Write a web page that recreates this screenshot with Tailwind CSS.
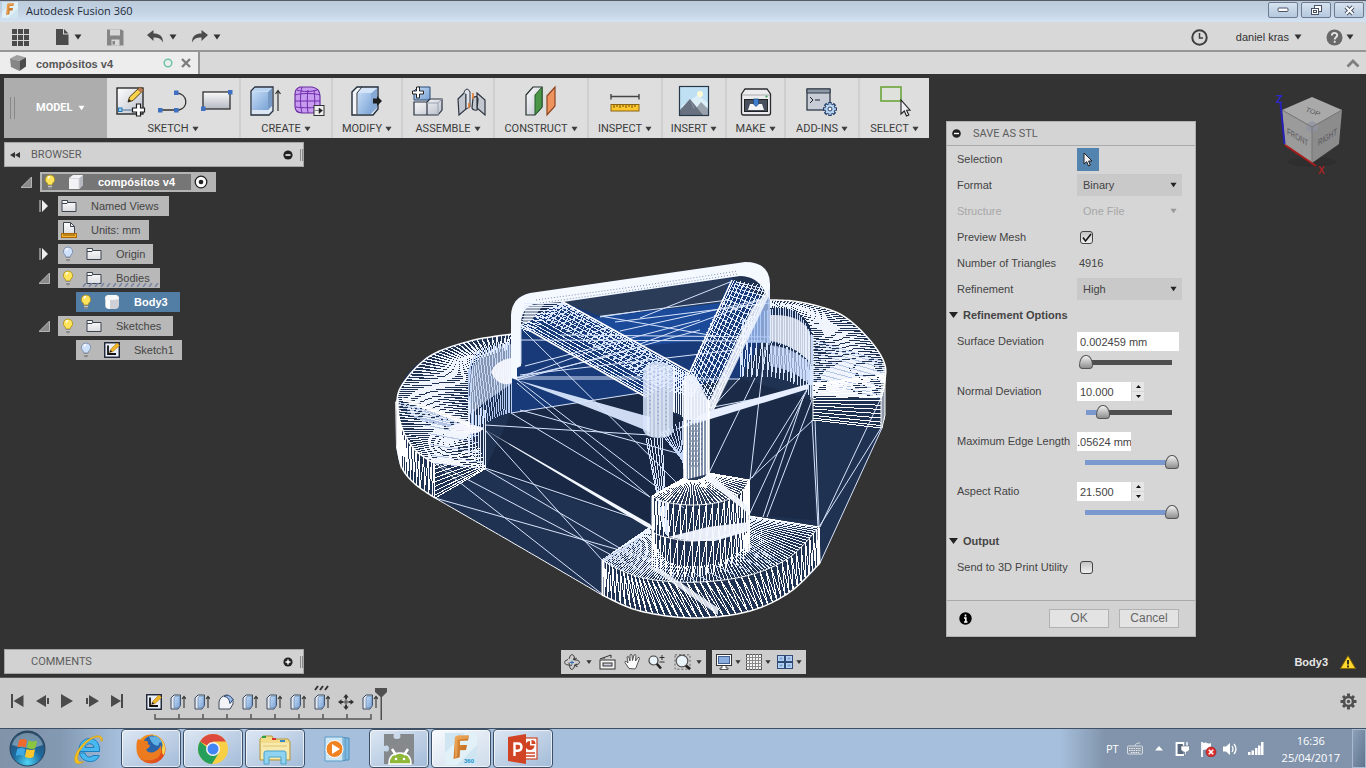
<!DOCTYPE html>
<html lang="en">
<head>
<meta charset="utf-8">
<meta name="viewport" content="width=device-width, initial-scale=1">
<title>Autodesk Fusion 360</title>
<script src="https://cdn.jsdelivr.net/npm/@tailwindcss/browser@4"></script>
</head>
<body class="flex h-screen min-h-[720px] flex-col overflow-hidden bg-[#333333] font-['Liberation_Sans',Arial,sans-serif] text-[11px] leading-4 text-[#444]">

<!-- Shared icon symbols -->
<svg class="absolute size-0" aria-hidden="true">
  <defs>
    <linearGradient id="gGrey" x1="0" y1="0" x2="1" y2="1"><stop offset="0" stop-color="#fff"/><stop offset="1" stop-color="#b9bec9"/></linearGradient>
    <linearGradient id="gGreyV" x1="0" y1="0" x2="0" y2="1"><stop offset="0" stop-color="#fafafa"/><stop offset="1" stop-color="#b4b8c2"/></linearGradient>
    <linearGradient id="gFold" x1="0" y1="0" x2="0" y2="1"><stop offset="0" stop-color="#fdfdfd"/><stop offset="1" stop-color="#dcdde2"/></linearGradient>
    <linearGradient id="gBlue" x1="0" y1="0" x2="1" y2="1"><stop offset="0" stop-color="#c4dbf5"/><stop offset="1" stop-color="#7ba4d6"/></linearGradient>
    <radialGradient id="gOrb" cx=".5" cy=".9" r=".9"><stop offset="0" stop-color="#4fd5f5"/><stop offset=".45" stop-color="#1c6ba0"/><stop offset="1" stop-color="#2b4a66"/></radialGradient>
    <linearGradient id="gFox" x1="0" y1="0" x2="1" y2="1"><stop offset="0" stop-color="#f9a11b"/><stop offset="1" stop-color="#d8391b"/></linearGradient>
    <linearGradient id="gF" x1="0" y1="0" x2="1" y2="1"><stop offset="0" stop-color="#e8963c"/><stop offset="1" stop-color="#b5611c"/></linearGradient>
  </defs>
  <symbol id="caret" viewBox="0 0 8 6"><path d="M0.500 .5h7L4 5.500z" fill="currentColor"/></symbol>
  <symbol id="bulbOn" viewBox="0 0 12 16"><path d="M6 1a4.500 4.500 0 0 0-3 8c.6.7.8 1.200.8 2h4.400c0-.8.2-1.300.8-2A4.500 4.500 0 0 0 6 1z" fill="#ffe45c" stroke="#a58a1c" stroke-width=".8"/><path d="M4 4.500q.5-1.700 2-2" stroke="#fff" stroke-width="1.300" fill="none"/><path d="M4 11h4v3l-1 1.200H5L4 14z" fill="#8a8a8a"/><path d="M4 12.500h4" stroke="#ddd" stroke-width=".7"/></symbol>
  <symbol id="bulbOff" viewBox="0 0 12 16"><path d="M6 1a4.500 4.500 0 0 0-3 8c.6.7.8 1.200.8 2h4.400c0-.8.2-1.300.8-2A4.500 4.500 0 0 0 6 1z" fill="#cfe0fa" stroke="#6f83a8" stroke-width=".8"/><path d="M4 4.500q.5-1.700 2-2" stroke="#fff" stroke-width="1.300" fill="none"/><path d="M4 11h4v3l-1 1.200H5L4 14z" fill="#8a8a8a"/><path d="M4 12.500h4" stroke="#ddd" stroke-width=".7"/></symbol>
  <symbol id="folder" viewBox="0 0 16 14"><path d="M1 12.500V1.500h5.500v2H15v9z" fill="url(#gFold)" stroke="#3c4450"/><path d="M1 4.500h5l1-1" stroke="#3c4450" fill="none"/></symbol>
  <symbol id="sketch" viewBox="0 0 16 16"><rect x=".75" y=".75" width="14.500" height="14.500" fill="#e9eefa" stroke="#1a2233" stroke-width="1.400"/><path d="M4 3.500V12h8" fill="none" stroke="#111" stroke-width="1.800"/><path d="M5.500 10.500 7 7l6-6 2.500 2.500-6.500 6z" fill="#f0b429" stroke="#b37f10" stroke-width=".6"/><path d="M5.500 10.500 6.500 8l1.800 1.600z" fill="#222"/></symbol>
  <symbol id="extr" viewBox="0 0 16 16"><path d="M1 4 4 1h6.500v10.500L8 15H1z" fill="#e5e9f0" stroke="#3c4a5c"/><path d="M4 4.500 5.500 2h4.500v9l-2 3H4z" fill="url(#gBlue)" stroke="#5577a5" stroke-width=".6"/><path d="M14 14V3M12 5l2-2.700L16 5" fill="none" stroke="#333" stroke-width="1.100"/></symbol>
  <symbol id="fusion" viewBox="0 0 32 32"><rect width="32" height="32" fill="#e2f1f8"/><path d="M0 20 20 0H0zM12 32 32 12v20z" fill="#cfe6f2"/><path d="M10 4 13 2.500h11l-1 5-8 .5v4h7l-1 5-6 .3-.3 7-6.200 1.700z" fill="url(#gF)"/><path d="M10 4v22l2.500-3V6.500l11-1 .5-3H13z" fill="#f0b067" opacity=".6"/></symbol>
</svg>

<!-- Window title bar -->
<header class="flex h-[22px] shrink-0 items-start border-t border-[#565b66] bg-gradient-to-b from-[#bccbda] via-[#c3d3e4] to-[#d3e3f2]">
  <svg class="ml-0.5 mt-px size-4" viewBox="0 0 32 32"><use href="#fusion"/></svg>
  <h1 class="ml-2 mt-px font-['Open_Sans','Noto_Sans',sans-serif] text-[11px] leading-[18px] text-[#1e2a38]">Autodesk Fusion 360</h1>
  <div class="ml-auto mr-0.5 mt-px flex gap-[3px]">
    <button aria-label="Minimize" class="grid h-4 w-[30px] place-items-center rounded-xs border border-[#6c7b90] bg-gradient-to-b from-[#d7e2ef] to-[#b4c8de]"><svg width="12" height="6"><rect x="1" y="1" width="10" height="3.500" rx="1" fill="#fff" stroke="#4a5366"/></svg></button>
    <button aria-label="Restore" class="grid h-4 w-[30px] place-items-center rounded-xs border border-[#6c7b90] bg-gradient-to-b from-[#d7e2ef] to-[#b4c8de]"><svg width="13" height="12" fill="#fff" stroke="#4a5366"><rect x="4.500" y="1.500" width="7" height="6"/><rect x="1.500" y="4.500" width="7" height="6"/><rect x="3.500" y="6.500" width="3" height="2"/></svg></button>
    <button aria-label="Close" class="grid h-4 w-[30px] place-items-center rounded-xs border border-[#6c7b90] bg-gradient-to-b from-[#d7e2ef] to-[#b4c8de]"><svg width="13" height="11"><path d="M3 2l7 7M10 2L3 9" stroke="#4a5366" stroke-width="4"/><path d="M3 2l7 7M10 2L3 9" stroke="#fff" stroke-width="2"/></svg></button>
  </div>
</header>

<!-- Quick access bar -->
<nav class="flex h-[30px] shrink-0 items-center border-b-2 border-[#969696] bg-[#d8d8d8] pt-0.5 text-[#333]" aria-label="Quick access">
  <button aria-label="Data panel" class="ml-3"><svg width="17" height="17" fill="#4b4b4b"><path d="M0 0h5v5H0zM6 0h5v5H6zM12 0h5v5h-5zM0 6h5v5H0zM6 6h5v5H6zM12 6h5v5h-5zM0 12h5v5H0zM6 12h5v5H6zM12 12h5v5h-5z"/></svg></button>
  <button aria-label="File" class="ml-[26px] flex items-center gap-[5px]"><svg width="14" height="16"><path d="M1 0h7v5.500h5.500V16H1z" fill="#4b4b4b"/><path d="M9 0l4.500 4.500H9z" fill="#4b4b4b"/></svg><svg class="h-1.5 w-2"><use href="#caret"/></svg></button>
  <button aria-label="Save" class="ml-[25px]"><svg width="17" height="17"><path d="M0 .5h14.500L16.500 2v14.500H0z" fill="#858585"/><path d="M3 .500h10v6H3zM4.500 10.500h8v6h-8z" fill="#d8d8d8"/><path d="M5.500 12h2.500v3.500H5.500z" fill="#858585"/></svg></button>
  <button aria-label="Undo" class="ml-[23px] flex items-center gap-[5px]"><svg width="17" height="14"><path d="M0 5 6.500 0v3.500c6 0 9.500 2.500 9.500 9-2-4-4.500-5-9.500-5V11z" fill="#4b4b4b"/></svg><svg class="h-1.5 w-2"><use href="#caret"/></svg></button>
  <button aria-label="Redo" class="ml-3.5 flex items-center gap-[5px]"><svg width="17" height="14"><path d="M17 5 10.500 0v3.500c-6 0-9.500 2.500-9.500 9 2-4 4.500-5 9.500-5V11z" fill="#4b4b4b"/></svg><svg class="h-1.5 w-2"><use href="#caret"/></svg></button>
  <button aria-label="Job status" class="ml-auto"><svg width="17" height="17" fill="none" stroke="#3e3e3e" stroke-width="2"><circle cx="8.500" cy="8.500" r="7.200"/><path d="M8.500 4v5H12" stroke-width="1.500"/></svg></button>
  <button class="ml-7 flex items-center gap-[5px]">daniel kras <svg class="h-1.5 w-2"><use href="#caret"/></svg></button>
  <button aria-label="Help" class="ml-6 mr-3 flex items-center gap-[3px]"><svg width="17" height="17"><circle cx="8.500" cy="8.500" r="8" fill="#686868"/><path d="M5.800 6.500c0-3.500 5.400-3.500 5.400-.3 0 2-2.500 2-2.500 4.300M8.700 11.800v2" fill="none" stroke="#e4e4e4" stroke-width="1.900"/></svg><svg class="h-1.5 w-2"><use href="#caret"/></svg></button>
</nav>

<!-- Document tabs -->
<div class="flex h-[22px] shrink-0 items-stretch bg-[#d9d9d9]">
  <div class="flex w-[200px] items-center border-r-2 border-[#969696] bg-[#ededed] pl-2.5">
    <svg width="17" height="17"><path d="M0 3.500 7 0l9 2.500L9.500 6z" fill="#a0a0a0"/><path d="M0 3.500 9.500 6v10L1 12z" fill="#868686"/><path d="M9.500 6 16 2.500v9L9.500 16z" fill="#4c4c4c"/></svg>
    <span class="ml-[9px] pt-0.5 text-[11px] font-bold text-[#555]">compósitos v4</span>
    <svg class="ml-auto" width="10" height="10"><circle cx="5" cy="5" r="3.800" fill="none" stroke="#6cc3a6" stroke-width="1.500"/></svg>
    <button aria-label="Close tab" class="ml-2 mr-[7px]"><svg width="10" height="10"><path d="M1 1l8 8M9 1L1 9" stroke="#7d7d7d" stroke-width="2.400"/></svg></button>
  </div>
  <button aria-label="Collapse" class="ml-auto mr-1.5"><svg width="14" height="9"><path d="M1.500 7.500 7 2l5.500 5.500" fill="none" stroke="#7e7e7e" stroke-width="2.800"/></svg></button>
</div>

<!-- Modelling canvas -->
<main class="relative flex min-h-0 flex-1 flex-col border-b border-[#5a5a5a] bg-[#333333] px-1 pb-[3px] pt-1">

  <svg id="mesh" class="absolute left-1/2 top-[176px] h-[380px] w-[505px] -translate-x-[293px]" viewBox="390 250 505 380" role="img" aria-label="Body3 preview mesh"></svg>

  <svg class="absolute right-4 top-4 h-[90px] w-[80px]" viewBox="1270 90 80 90" role="img" aria-label="View cube">
    <ellipse cx="1312" cy="162" rx="24" ry="5" fill="#2e2e2e"/>
    <path d="M1282 110 1312 97l30 13-30 17z" fill="#a9a9a9"/><path d="M1282 110l30 17v36l-27-18z" fill="#9b9b9b"/><path d="M1342 110l-30 17v36l27-19z" fill="#8c8c8c"/>
    <path d="M1306 124l6-3 6 3v6l-6 3-6-3z" fill="#8f93a3" opacity=".7"/>
    <path d="M1282 110l30 17 30-17M1312 127v36" fill="none" stroke="#777"/>
    <path d="M1280.500 103l4 41" stroke="#2620b8" stroke-width="2"/><path d="M1285 145l31 21" stroke="#a81c1c" stroke-width="2"/>
    <g font-family="Liberation Sans, sans-serif" font-size="9" fill="#55555a">
      <text transform="matrix(.75 .28 -.35 .6 1305 111)" font-size="9">TOP</text>
      <text transform="matrix(.68 .4 0 1 1287 134)">FRONT</text>
      <text transform="matrix(.68 -.42 0 1 1318 146)">RIGHT</text>
    </g>
    <text x="1276" y="103" font-size="11" font-weight="bold" fill="#2c26d0" font-family="Liberation Sans, sans-serif">Z</text>
    <text x="1318" y="174" font-size="10" font-weight="bold" fill="#a82222" font-family="Liberation Sans, sans-serif">X</text>
  </svg>

  <!-- Command ribbon -->
  <div class="flex h-[60px] shrink-0 self-start bg-[#dedede] font-['Roboto',sans-serif] text-[#3c3c3c]" role="toolbar" aria-label="Model tools">
    <button class="flex w-[103px] items-center bg-[#adadad] pl-1.5 font-bold text-white"><span class="h-[22px] w-[5px] border-x border-[#888]"></span><span class="ml-[21px]">MODEL</span><svg class="ml-[5px] h-1.5 w-[7px]"><use href="#caret"/></svg></button>
    <div class="flex w-[134px] flex-col items-center justify-between border-r-2 border-[#cfcfcf] pt-[7px] pb-px">
      <div class="flex w-full items-center justify-between pl-2 pr-1.5">
        <svg width="32" height="32" viewBox="0 0 32 32"><rect x="2" y="3" width="26" height="26" fill="url(#gGrey)" stroke="#1d1d1d" stroke-width="1.300"/><path d="M4 25h16" stroke="#4a6f9e"/><rect x="3.500" y="23" width="3.500" height="3.500" fill="#8fd0f2" stroke="#2576b2"/><path d="M13 17l1.500-5L25 2l3.500 3L18 15.500z" fill="#f7d24a" stroke="#4d3a10"/><path d="M25 2l3.500 3-2.500 2.500L22.500 5z" fill="#b87b53"/><path d="M13 17l1-3 2 2z" fill="#222"/><path d="M21.500 19h4v4h4v4h-4v4h-4v-4h-4v-4h4z" fill="#fff" stroke="#1d1d1d" stroke-width="1.200"/></svg>
        <svg width="32" height="32" viewBox="0 0 32 32"><path d="M2 25h19c10-2 9-17-3-17" fill="none" stroke="#333" stroke-width="1.300"/><path d="M0 23h4.500v4.500H0zM16 23h4.500v4.500H16zM16 5.500h4.500V10H16z" fill="#3f70c4"/></svg>
        <svg width="32" height="32" viewBox="0 0 32 32"><rect x="2" y="7" width="27" height="17" fill="url(#gGreyV)" stroke="#222" stroke-width="1.200"/><path d="M0 21.500h4.500V26H0zM27 5h4.500v4.500H27z" fill="#3f70c4"/></svg>
      </div>
      <div class="flex items-center gap-[3px]">SKETCH <svg class="h-1.5 w-[7px]"><use href="#caret"/></svg></div>
    </div>
    <div class="flex w-[92px] flex-col items-center justify-between border-r-2 border-[#cfcfcf] pt-[7px] pb-px">
      <div class="flex w-full items-center justify-between pl-2 pr-1.5">
        <svg width="34" height="32" viewBox="0 0 34 32"><path d="M2 6 6 2h18v24l-4 4H2z" fill="#dce6f2" stroke="#26323f" stroke-width="1.300"/><path d="M3 7h16v18H3z" fill="url(#gBlue)"/><path d="M19 7l4-4v18l-4 4z" fill="#7699c4"/><path d="M3 6.500l3-3.500h16l-3 3.500z" fill="#b9d4f0"/><path d="M29 26V6M26.500 9 29 5.500 31.500 9" fill="none" stroke="#333" stroke-width="1.200"/></svg>
        <svg width="32" height="32" viewBox="0 0 32 32"><path d="M7 2h12c6 1 8 5 8 9v9c0 5-3 7-7 8H9c-5 0-7-3-7-7V9c0-4 2-6 5-7z" fill="#c79bf0" stroke="#6a2fa0" stroke-width="1.200"/><path d="M9 2c-2 6-2 19 0 26M15 5c-1 6-1 17 0 23M21 5c1 6 1 17 0 22M2 10c6-2 19-2 25 0M2 16h25M3 22c6 1 18 1 24 0M4 5c6 2 14 2 20 0" fill="none" stroke="#6f2bab"/><rect x="21" y="20.500" width="10" height="10" fill="#eee" stroke="#333"/><path d="M22 25.500h4v-2.500l3.500 2.500-3.500 3V25.500" fill="#222" stroke="#222" stroke-width=".5"/></svg>
      </div>
      <div class="flex items-center gap-[3px]">CREATE <svg class="h-1.5 w-[7px]"><use href="#caret"/></svg></div>
    </div>
    <div class="flex w-[70px] flex-col items-center justify-between border-r-2 border-[#cfcfcf] pt-[7px] pb-px">
      <svg width="32" height="32" viewBox="0 0 32 32"><path d="M1 7 6 2h21v22l-5 6H1z" fill="#f2f4f7" stroke="#222e3c" stroke-width="1.400"/><path d="M7 7.500h13v21.500H7z" fill="url(#gBlue)"/><path d="M20 8l6-5v20l-6 6z" fill="#86a9d6"/><path d="M7 7.500 12 3h14l-6 5z" fill="#d3e4f8"/><path d="M6 29V8l5-6" fill="none" stroke="#222e3c"/><path d="M22 13.500h4V11l5 5-5 5v-2.500h-4z" fill="#1e1e1e"/></svg>
      <div class="flex items-center gap-[3px]">MODIFY <svg class="h-1.5 w-[7px]"><use href="#caret"/></svg></div>
    </div>
    <div class="flex w-[92px] flex-col items-center justify-between border-r-2 border-[#cfcfcf] pt-[7px] pb-px">
      <div class="flex w-full items-center justify-between pl-2 pr-1.5">
        <svg width="32" height="32" viewBox="0 0 32 32"><path d="M3 6l4-4h12v13H3z" fill="url(#gBlue)" stroke="#2a4a75"/><path d="M3 17h13v13H3zM16 17l3-3h12v11l-4 5H16z" fill="url(#gGrey)" stroke="#2b3340" stroke-width="1.200"/><path d="M27 30V18l4-4M16 18h11" stroke="#9aa3b2" fill="none"/><path d="M5.500 2h3v4h4v3h-4v4h-3V9h-4V6h4z" fill="#fff" stroke="#222"/></svg>
        <svg width="30" height="32" viewBox="0 0 30 32"><path d="M1 14 9 6v18L2 30z" fill="#c3c8d0" stroke="#2d3440" stroke-width="1.200"/><path d="M7 7q3-6 6 0v15l-4 2V9" fill="#dfe3e9" stroke="#2d3440"/><path d="M16 13q4-3 5 1l-1 11q-4 1-5-2zM20 8l8 7v15l-8-7z" fill="#c3c8d0" stroke="#2d3440" stroke-width="1.200"/><path d="M16 8v6M12 18v5" stroke="#e37c2a" stroke-width="1.600"/></svg>
      </div>
      <div class="flex items-center gap-[3px]">ASSEMBLE <svg class="h-1.5 w-[7px]"><use href="#caret"/></svg></div>
    </div>
    <div class="flex w-[94px] flex-col items-center justify-between border-r-2 border-[#cfcfcf] pt-[7px] pb-px">
      <svg width="32" height="32" viewBox="0 0 32 32"><path d="M1 10 8 2h9v20l-7 8H1z" fill="url(#gGrey)" stroke="#26302c" stroke-width="1.200"/><path d="M10 10l7-8v20l-7 8z" fill="#4a9646" stroke="#235a28"/><path d="M22 11l8-9v19l-8 9z" fill="#ee935e" stroke="#8d4420" stroke-width="1.200"/></svg>
      <div class="flex items-center gap-[3px]">CONSTRUCT <svg class="h-1.5 w-[7px]"><use href="#caret"/></svg></div>
    </div>
    <div class="flex w-[74px] flex-col items-center justify-between border-r-2 border-[#cfcfcf] pt-[7px] pb-px">
      <svg width="32" height="32" viewBox="0 0 32 32"><path d="M2 11.500h28M2 9v5.500M30 9v5.500" stroke="#444" stroke-width="1.400"/><rect x="2" y="19.500" width="28" height="6.500" fill="#fcc62c" stroke="#8b6414"/><path d="M5 20v3M8 20v2M11 20v3M14 20v2M17 20v3M20 20v2M23 20v3M26 20v2" stroke="#6d4e0b"/></svg>
      <div class="flex items-center gap-[3px]">INSPECT <svg class="h-1.5 w-[7px]"><use href="#caret"/></svg></div>
    </div>
    <div class="flex w-[64px] flex-col items-center justify-between border-r-2 border-[#cfcfcf] pt-[7px] pb-px">
      <svg width="32" height="32" viewBox="0 0 32 32"><rect x="1.500" y="1.500" width="29" height="29" fill="#bfe0f2"/><path d="M2 22 20 10l10 8v4z" fill="#dceff7"/><circle cx="22" cy="9" r="3" fill="#fff9d8"/><path d="M16 26l7-9 8 8v5H14z" fill="#9aa2ab"/><path d="M2 25l10-11 13 16H2z" fill="#68717f"/><path d="M12 14l5 10-2-1z" fill="#8c95a2"/><rect x="1.500" y="1.500" width="29" height="29" fill="none" stroke="#283848" stroke-width="1.200"/></svg>
      <div class="flex items-center gap-[3px]">INSERT <svg class="h-1.5 w-[7px]"><use href="#caret"/></svg></div>
    </div>
    <div class="flex w-[59px] flex-col items-center justify-between border-r-2 border-[#cfcfcf] pt-[7px] pb-px">
      <svg width="32" height="32" viewBox="0 0 32 32"><path d="M1.500 9 5 4h22l3.500 5v19q0 2-2 2h-25q-2 0-2-2z" fill="#ececef" stroke="#2b2b2f" stroke-width="1.300"/><path d="M2 10h28" stroke="#aaa"/><rect x="4.500" y="14.500" width="23" height="12" fill="#48505e" stroke="#222"/><path d="M8 25l2-6h12l2 6z" fill="#f4f4f6"/><path d="M13.500 14h5v5L16 21.500 13.500 19z" fill="#3d7ed0" stroke="#173f75" stroke-width=".7"/><circle cx="26.500" cy="11.500" r="1.100" fill="#3aa64c"/></svg>
      <div class="flex items-center gap-[3px]">MAKE <svg class="h-1.5 w-[7px]"><use href="#caret"/></svg></div>
    </div>
    <div class="flex w-[74px] flex-col items-center justify-between border-r-2 border-[#cfcfcf] pt-[7px] pb-px">
      <svg width="34" height="32" viewBox="0 0 34 32"><rect x="2" y="4" width="23" height="21" fill="#c7ccd6" stroke="#2f3947" stroke-width="1.300"/><path d="M2 4h23v4H2z" fill="#8f98a7" stroke="#2f3947"/><path d="M5 12l3 3-3 3M10 15h5" fill="none" stroke="#222"/><g stroke="#233f68" stroke-width="3.400"><path d="M25 17v14M18 24h14M20 19l10 10M30 19l-10 10"/></g><g stroke="#b9d6f5" stroke-width="1.400"><path d="M25 18v12M19 24h12M21 20l8 8M29 20l-8 8"/></g><circle cx="25" cy="24" r="4.500" fill="#b9d6f5"/><circle cx="25" cy="24" r="2" fill="#fff" stroke="#233f68"/></svg>
      <div class="flex items-center gap-[3px]">ADD-INS <svg class="h-1.5 w-[7px]"><use href="#caret"/></svg></div>
    </div>
    <div class="flex w-[69px] flex-col items-center justify-between pt-[7px] pb-px">
      <svg width="32" height="32" viewBox="0 0 32 32"><rect x="2" y="2" width="20" height="14" fill="#dfe2dc" stroke="#6ba53a" stroke-width="1.600"/><path d="M22 15v14l3.300-3 2.200 5 2.300-1-2.200-4.800H31z" fill="#f0f1f5" stroke="#222" stroke-width="1.100"/></svg>
      <div class="flex items-center gap-[3px]">SELECT <svg class="h-1.5 w-[7px]"><use href="#caret"/></svg></div>
    </div>
  </div>

  <!-- Browser tree -->
  <section class="relative mt-1 w-[300px]" aria-label="Browser">
    <div class="flex h-[25px] items-center border border-[#a5a5a5] bg-[#d2d2d2] pl-[5px]">
      <button aria-label="Hide browser"><svg width="10" height="6"><path d="M5 0v6L0 3zM10 0v6L5 3z" fill="#333"/></svg></button>
      <h2 class="ml-[11px] font-['Roboto',sans-serif] text-[#5d5d5d]">BROWSER</h2>
      <button aria-label="Collapse browser" class="ml-auto"><svg width="10" height="10"><circle cx="5" cy="5" r="4.600" fill="#222"/><path d="M2.500 5h5" stroke="#fff" stroke-width="1.500"/></svg></button>
      <span class="ml-[7px] h-3 w-[3px] border-x border-[#8a8a8a]"></span>
    </div>
    <ul class="mt-[5px] flex flex-col gap-1">
      <li class="flex h-5 items-center gap-2 pl-[17px]"><svg width="11" height="11"><path d="M10.500 0v10.500H0z" fill="#8b8b8b" stroke="#b5b5b5"/></svg>
        <div class="flex h-5 items-center bg-[#b4b4b4] pl-0.5 text-white"><span class="flex h-4 items-center bg-[#767676] pl-0.5 pr-4 font-bold"><svg class="h-4 w-3"><use href="#bulbOn"/></svg><svg class="ml-3" width="16" height="16"><path d="M1 4 5 1h10v10l-4 4H1z" fill="#f3f3f5"/><path d="M11 4.500 15 1v10l-4 4z" fill="#b7b9c0"/><path d="M1 4.500h10V15" stroke="#d5d6da" fill="none"/></svg><span class="ml-3.5">compósitos v4</span></span><svg class="ml-[3px] mr-2" width="14" height="14"><circle cx="7" cy="7" r="5.800" fill="#fff" stroke="#222" stroke-width="1.300"/><circle cx="7" cy="7" r="2.300" fill="#222"/></svg></div></li>
      <li class="flex h-5 items-center gap-2 pl-[35px]"><svg width="11" height="12"><path d="M1 0v12" stroke="#ddd"/><path d="M3 0l6 6-6 6z" fill="#eee"/></svg>
        <div class="flex h-5 items-center bg-[#b8b8b8] pl-[3px] pr-2.5"><svg class="h-3.5 w-4"><use href="#folder"/></svg><span class="ml-3.5">Named Views</span></div></li>
      <li class="flex h-5 items-center pl-[54px]">
        <div class="flex h-5 items-center bg-[#b8b8b8] pl-[3px] pr-2"><svg width="16" height="16"><path d="M2.500.5h7l4 4V12h-11z" fill="url(#gFold)" stroke="#3c4450"/><path d="M9.500.5v4h4" fill="none" stroke="#3c4450"/><rect x=".5" y="11.500" width="15" height="4" fill="#f2b12c" stroke="#a86a0a"/><path d="M3 12v2M5 12v2M7 12v2M9 12v2M11 12v2M13 12v2" stroke="#8a5507"/></svg><span class="ml-3.5">Units: mm</span></div></li>
      <li class="flex h-5 items-center gap-2 pl-[35px]"><svg width="11" height="12"><path d="M1 0v12" stroke="#ddd"/><path d="M3 0l6 6-6 6z" fill="#eee"/></svg>
        <div class="flex h-5 items-center bg-[#b8b8b8] pl-1 pr-2"><svg class="h-4 w-3"><use href="#bulbOff"/></svg><svg class="ml-3 h-3.5 w-4"><use href="#folder"/></svg><span class="ml-3.5">Origin</span></div></li>
      <li class="flex h-5 items-center gap-2 pl-[35px]"><svg width="11" height="11"><path d="M10.500 0v10.500H0z" fill="#8b8b8b" stroke="#b5b5b5"/></svg>
        <div class="relative flex h-5 items-center bg-[#b8b8b8] pl-1 pr-2.5"><svg class="h-4 w-3"><use href="#bulbOn"/></svg><svg class="ml-3 h-3.5 w-4"><use href="#folder"/></svg><span class="ml-3.5">Bodies</span>
          <svg class="absolute bottom-px left-6" width="78" height="4"><path d="M1 4l3-4M7 4l3-4M13 4l3-4M19 4l3-4M25 4l3-4M31 4l3-4M37 4l3-4M43 4l3-4M49 4l3-4M55 4l3-4M61 4l3-4M67 4l3-4M73 4l3-4" stroke="#7c86a6" stroke-width="1.600"/></svg></div></li>
      <li class="flex h-5 items-center pl-[72px]">
        <div class="flex h-5 items-center bg-[#527da4] pl-1 pr-3 font-bold text-white"><svg class="h-4 w-3"><use href="#bulbOn"/></svg><svg class="ml-3" width="16" height="16"><rect x="1" y="1" width="14" height="14" rx="4" fill="#cfd1d6"/><path d="M1 5q0-4 4-4h6q4 0 4 4-7 2-14 0z" fill="#f7f7f8"/><path d="M2 5v8q2 2 4 2V6z" fill="#fff"/></svg><span class="ml-3.5">Body3</span></div></li>
      <li class="flex h-5 items-center gap-2 pl-[35px]"><svg width="11" height="11"><path d="M10.500 0v10.500H0z" fill="#8b8b8b" stroke="#b5b5b5"/></svg>
        <div class="flex h-5 items-center bg-[#b8b8b8] pl-1 pr-3"><svg class="h-4 w-3"><use href="#bulbOn"/></svg><svg class="ml-3 h-3.5 w-4"><use href="#folder"/></svg><span class="ml-3.5">Sketches</span></div></li>
      <li class="flex h-5 items-center pl-[72px]">
        <div class="flex h-5 items-center bg-[#b8b8b8] pl-1 pr-2"><svg class="h-4 w-3"><use href="#bulbOff"/></svg><svg class="ml-3 size-4"><use href="#sketch"/></svg><span class="ml-3.5">Sketch1</span></div></li>
    </ul>
  </section>

  <!-- Comments, view controls, selection status -->
  <div class="relative mt-auto grid grid-cols-[1fr_auto_1fr] items-center">
    <div class="flex h-[25px] w-[300px] items-center border border-[#a5a5a5] bg-[#d2d2d2] pl-[26px]">
      <h2 class="font-['Roboto',sans-serif] text-[#5d5d5d]">COMMENTS</h2>
      <button aria-label="Expand comments" class="ml-auto"><svg width="10" height="10"><circle cx="5" cy="5" r="4.600" fill="#222"/><path d="M2.500 5h5M5 2.500v5" stroke="#fff" stroke-width="1.400"/></svg></button>
      <span class="ml-[7px] h-3 w-[3px] border-x border-[#8a8a8a]"></span>
    </div>
    <div class="flex gap-1.5 text-[#333]">
      <div class="flex h-6 w-[145px] items-center justify-between bg-[#cdcdcd] pl-[3px] pr-1">
        <button aria-label="Orbit" class="flex items-center gap-1"><svg width="18" height="16" fill="none" stroke="#444"><path d="M5 5q1-4.500 3-4.500t3 4.500M11 10.500q-1 5-3 5-2.500 0-3-7"/><path d="M4 5.500Q.5 6.500.5 8.300q0 3 7.500 3M12 11q3.500-.7 3.500-2.700Q15.500 6 9 5.500"/><path d="M6 8.500h4M8 6.500v4" stroke="#2f6fb5"/><path d="M13 10l-2 1.300 2.500 1.500M9.500 4 11 5.800 12.500 4" stroke-width="1.200"/></svg><svg class="h-1.5 w-1.5"><use href="#caret"/></svg></button>
        <button aria-label="Look at"><svg width="17" height="16"><path d="M1 5 12 1v3M5 3.500V5" stroke="#333" fill="none"/><rect x="1" y="6" width="15" height="9" fill="#f4f4f4" stroke="#333"/><rect x="4" y="9" width="9" height="3" fill="#ccd" stroke="#333"/></svg></button>
        <button aria-label="Pan"><svg width="17" height="17"><path d="M5 15.500 1 9.500q-.5-1.800 1.500-1L4 10 3 4q.5-1.500 1.800 0L6 8V2q1-1.500 2 0l.5 5.500L10 2q1.200-1.200 2 .3L11.500 8 14 4.500q1.500-.7 1.500 1L13 12q-.5 2.500-2 4z" fill="#fafafa" stroke="#444" stroke-width=".9"/></svg></button>
        <button aria-label="Zoom"><svg width="18" height="16"><path d="M8 9l5 5.500" stroke="#222" stroke-width="2.600"/><circle cx="5.500" cy="6.500" r="4.500" fill="#e9f3fa" stroke="#444" stroke-width="1.200"/><path d="M11.500 3.500h5M14 1v5M11.500 8h5" stroke="#333"/></svg></button>
        <button aria-label="Fit" class="flex items-center gap-1"><svg width="18" height="16"><rect x="1" y=".8" width="15" height="14.400" fill="none" stroke="#666" stroke-dasharray="2 2"/><path d="M10 10l6 5" stroke="#222" stroke-width="2.800"/><circle cx="8" cy="7" r="5.800" fill="#e9f3fa" stroke="#555" stroke-width="1.200"/></svg><svg class="h-1.5 w-1.5"><use href="#caret"/></svg></button>
      </div>
      <div class="flex h-6 w-[94px] items-center justify-between bg-[#cdcdcd] px-1">
        <button aria-label="Display settings" class="flex items-center gap-0.5"><svg width="17" height="16"><rect x=".5" y=".5" width="15" height="11" fill="#fff" stroke="#333"/><rect x="2.500" y="2.500" width="11" height="7" fill="#8aaee0" stroke="#44608f"/><path d="M6 12v2H4v1.500h8V14h-2v-2" fill="#fff" stroke="#333" stroke-width=".8"/></svg><svg class="h-1.5 w-1.5"><use href="#caret"/></svg></button>
        <button aria-label="Grid settings" class="flex items-center gap-0.5"><svg width="17" height="16"><rect x=".5" y=".5" width="15" height="15" fill="#f5f5f5" stroke="#555"/><path d="M3.500 0v16M6.500 0v16M9.500 0v16M12.500 0v16M0 3.500h16M0 6.500h16M0 9.500h16M0 12.500h16" stroke="#888"/></svg><svg class="h-1.5 w-1.5"><use href="#caret"/></svg></button>
        <button aria-label="Viewports" class="flex items-center gap-0.5"><svg width="17" height="14" fill="#b5d2f5" stroke="#2f4a75"><rect x=".5" y=".5" width="7" height="6"/><rect x="8.500" y=".5" width="7" height="6"/><rect x=".5" y="7.500" width="7" height="6"/><rect x="8.500" y="7.500" width="7" height="6"/><path d="M2.500 3.500h3M10.500 3.500h3M2.500 10.500h3M10.500 10.500h3" stroke="#7ba0d0" stroke-width="2"/></svg><svg class="h-1.5 w-1.5"><use href="#caret"/></svg></button>
      </div>
    </div>
    <div class="flex items-center justify-end gap-3 pr-1.5 font-bold text-[#e6e6e6]">Body3 <svg width="16" height="14"><path d="M8 .8 15.500 13.500H.5z" fill="#ffd92e" stroke="#8a6d00"/><path d="M8 5v4.500M8 10.500v2" stroke="#222" stroke-width="1.800"/></svg></div>
  </div>

  <!-- Save As STL dialog floating over the canvas -->
  <form class="absolute right-[170px] top-[47px] w-[250px] border border-[#b0b0b0] bg-[#d6d6d6] shadow" onsubmit="return false">
    <div class="flex h-6 items-center border-b border-[#a9a9a9] bg-[#d4d4d4] pl-[5px]"><svg width="9" height="9"><circle cx="4.500" cy="4.500" r="4.300" fill="#222"/><path d="M2 4.500h5" stroke="#fff" stroke-width="1.400"/></svg><h2 class="ml-3 font-['Roboto',sans-serif] text-[#5d5d5d]">SAVE AS STL</h2></div>
    <div class="grid grid-cols-[120px_1fr] auto-rows-[26px] items-center pl-2.5 pr-[13px]">
      <label for="sel">Selection</label>
      <button id="sel" type="button" aria-label="Select bodies" class="grid h-[23px] w-[22px] place-items-center bg-[#5384b0]"><svg width="10" height="15"><path d="M1 1v11l2.700-2.300L5.500 14l1.800-.8L5.600 9H9z" fill="#f3f3f3" stroke="#222"/></svg></button>
      <label for="fmt">Format</label>
      <div class="relative"><select id="fmt" class="h-[22px] w-[105px] appearance-none bg-[#c9c9c9] pl-1.5"><option>Binary</option><option>ASCII</option></select><svg class="pointer-events-none absolute left-[93px] top-2 h-1.5 w-[7px] text-[#222]"><use href="#caret"/></svg></div>
      <label for="str" class="text-[#a6a6a6]">Structure</label>
      <div class="relative"><select id="str" disabled class="h-[22px] w-[105px] appearance-none pl-1.5 text-[#a6a6a6] opacity-100"><option>One File</option></select><svg class="pointer-events-none absolute left-[93px] top-2 h-1.5 w-[7px] text-[#999]"><use href="#caret"/></svg></div>
      <label for="prev">Preview Mesh</label>
      <div class="relative flex pl-[3px]"><input id="prev" type="checkbox" checked class="peer size-[13px] appearance-none rounded-[3px] border border-[#444] bg-gradient-to-b from-[#c4c4c4] to-[#f0f0f0]"><svg class="pointer-events-none absolute left-[5px] top-0.5 hidden peer-checked:block" width="10" height="9"><path d="M1 4.500 3.500 8 9 1" fill="none" stroke="#111" stroke-width="1.500"/></svg></div>
      <span>Number of Triangles</span><output class="pl-0.5">4916</output>
      <label for="ref">Refinement</label>
      <div class="relative"><select id="ref" class="h-[22px] w-[105px] appearance-none bg-[#c9c9c9] pl-1.5"><option>High</option><option>Medium</option><option>Low</option></select><svg class="pointer-events-none absolute left-[93px] top-2 h-1.5 w-[7px] text-[#222]"><use href="#caret"/></svg></div>
    </div>
    <h3 class="flex h-[26px] items-center gap-[5px] pl-0.5 font-bold"><svg width="9" height="6"><path d="M0 0h9L4.500 6z" fill="#222"/></svg>Refinement Options</h3>
    <div class="grid grid-cols-[120px_1fr] auto-rows-[50px] pl-2.5 pr-[12px]">
      <label for="sd" class="pt-[5px]">Surface Deviation</label>
      <div class="pt-1"><input id="sd" value="0.002459 mm" class="block h-[19px] w-[102px] bg-white px-[3px]">
        <input type="range" aria-label="Surface deviation slider" value="0" class="my-[3px] ml-0.5 block h-4 w-[100px] appearance-none bg-[linear-gradient(#4f4f4f,#4f4f4f)] bg-[length:86px_5px] bg-center bg-no-repeat [&::-webkit-slider-thumb]:h-3.5 [&::-webkit-slider-thumb]:w-3.5 [&::-webkit-slider-thumb]:appearance-none [&::-webkit-slider-thumb]:rounded-[50%_50%_4px_4px/80%_80%_4px_4px] [&::-webkit-slider-thumb]:border [&::-webkit-slider-thumb]:border-[#555] [&::-webkit-slider-thumb]:bg-gradient-to-b [&::-webkit-slider-thumb]:from-[#f2f2f2] [&::-webkit-slider-thumb]:to-[#8f8f8f]"></div>
      <label for="nd" class="pt-[5px]">Normal Deviation</label>
      <div class="pt-1"><div class="flex gap-px"><input id="nd" value="10.000" class="block h-[19px] w-[54px] bg-white px-[3px]"><div class="flex flex-col gap-px"><button type="button" aria-label="Increase" class="grid h-[9px] w-3 place-items-center bg-[#e6e6e6]"><svg width="5" height="3"><path d="M0 3h5L2.500 0z" fill="#111"/></svg></button><button type="button" aria-label="Decrease" class="grid h-[9px] w-3 place-items-center bg-[#e6e6e6]"><svg width="5" height="3"><path d="M0 0h5L2.500 3z" fill="#111"/></svg></button></div></div>
        <input type="range" aria-label="Normal deviation slider" value="20" class="my-[3px] ml-0.5 block h-4 w-[100px] appearance-none bg-[linear-gradient(90deg,#7b98cf_20%,#4f4f4f_20%)] bg-[length:86px_5px] bg-center bg-no-repeat [&::-webkit-slider-thumb]:h-3.5 [&::-webkit-slider-thumb]:w-3.5 [&::-webkit-slider-thumb]:appearance-none [&::-webkit-slider-thumb]:rounded-[50%_50%_4px_4px/80%_80%_4px_4px] [&::-webkit-slider-thumb]:border [&::-webkit-slider-thumb]:border-[#555] [&::-webkit-slider-thumb]:bg-gradient-to-b [&::-webkit-slider-thumb]:from-[#f2f2f2] [&::-webkit-slider-thumb]:to-[#8f8f8f]"></div>
      <label for="me" class="whitespace-nowrap pt-[5px]">Maximum Edge Length</label>
      <div class="pt-1"><input id="me" value=".05624 mm" class="block h-[19px] w-[54px] bg-white">
        <input type="range" aria-label="Maximum edge length slider" value="100" class="my-[3px] ml-0.5 block h-4 w-[100px] appearance-none bg-[linear-gradient(#7b98cf,#7b98cf)] bg-[length:88px_5px] bg-center bg-no-repeat [&::-webkit-slider-thumb]:h-3.5 [&::-webkit-slider-thumb]:w-3.5 [&::-webkit-slider-thumb]:appearance-none [&::-webkit-slider-thumb]:rounded-[50%_50%_4px_4px/80%_80%_4px_4px] [&::-webkit-slider-thumb]:border [&::-webkit-slider-thumb]:border-[#555] [&::-webkit-slider-thumb]:bg-gradient-to-b [&::-webkit-slider-thumb]:from-[#f2f2f2] [&::-webkit-slider-thumb]:to-[#8f8f8f]"></div>
      <label for="ar" class="pt-[5px]">Aspect Ratio</label>
      <div class="pt-1"><div class="flex gap-px"><input id="ar" value="21.500" class="block h-[19px] w-[54px] bg-white px-[3px]"><div class="flex flex-col gap-px"><button type="button" aria-label="Increase" class="grid h-[9px] w-3 place-items-center bg-[#e6e6e6]"><svg width="5" height="3"><path d="M0 3h5L2.500 0z" fill="#111"/></svg></button><button type="button" aria-label="Decrease" class="grid h-[9px] w-3 place-items-center bg-[#e6e6e6]"><svg width="5" height="3"><path d="M0 0h5L2.500 3z" fill="#111"/></svg></button></div></div>
        <input type="range" aria-label="Aspect ratio slider" value="100" class="my-[3px] ml-0.5 block h-4 w-[100px] appearance-none bg-[linear-gradient(#7b98cf,#7b98cf)] bg-[length:88px_5px] bg-center bg-no-repeat [&::-webkit-slider-thumb]:h-3.5 [&::-webkit-slider-thumb]:w-3.5 [&::-webkit-slider-thumb]:appearance-none [&::-webkit-slider-thumb]:rounded-[50%_50%_4px_4px/80%_80%_4px_4px] [&::-webkit-slider-thumb]:border [&::-webkit-slider-thumb]:border-[#555] [&::-webkit-slider-thumb]:bg-gradient-to-b [&::-webkit-slider-thumb]:from-[#f2f2f2] [&::-webkit-slider-thumb]:to-[#8f8f8f]"></div>
    </div>
    <h3 class="flex h-[26px] items-center gap-[5px] pl-0.5 font-bold"><svg width="9" height="6"><path d="M0 0h9L4.500 6z" fill="#222"/></svg>Output</h3>
    <div class="mb-5 grid h-[26px] grid-cols-[120px_1fr] items-center pl-2.5"><label for="send">Send to 3D Print Utility</label><div class="flex pl-[3px]"><input id="send" type="checkbox" class="size-[13px] appearance-none rounded-[3px] border border-[#444] bg-gradient-to-b from-[#c4c4c4] to-[#f0f0f0]"></div></div>
    <div class="flex h-9 items-center border-t border-[#a9a9a9] bg-[#d2d2d2] pl-3 pr-4"><svg width="13" height="13"><circle cx="6.500" cy="6.500" r="6.200" fill="#000"/><path d="M6.500 2.500v2M5 6h1.800v4M5 10h3.500" stroke="#fff" stroke-width="1.600" fill="none"/></svg>
      <button class="ml-auto h-[19px] w-[60px] border border-[#b2b2b2] bg-[#e3e3e3] text-xs leading-[17px] text-[#666]">OK</button><button type="button" class="ml-2.5 h-[19px] w-[60px] border border-[#b2b2b2] bg-[#e3e3e3] text-xs leading-[17px] text-[#666]">Cancel</button></div>
  </form>
</main>

<!-- Design timeline -->
<section class="flex h-[50px] shrink-0 items-start bg-[#cccccc] pl-[11px] text-[#4a4a4a]" aria-label="Timeline">
  <div class="mt-4 flex gap-[11px]">
    <button aria-label="To start"><svg width="14" height="14" fill="currentColor"><path d="M0 0h2v14H0zM12.500 1v12L2.500 7z"/></svg></button>
    <button aria-label="Step back"><svg width="14" height="14" fill="currentColor"><path d="M10 1v12L0 7zM11 4h2v6h-2z"/></svg></button>
    <button aria-label="Play"><svg width="14" height="14" fill="currentColor"><path d="M0 0l12 7-12 7z"/></svg></button>
    <button aria-label="Step forward"><svg width="14" height="14" fill="currentColor"><path d="M3 1v12l10-6zM0 4h2v6H0z"/></svg></button>
    <button aria-label="To end"><svg width="14" height="14" fill="currentColor"><path d="M12 0h-2v14h2zM0 1v12l10-6z"/></svg></button>
  </div>
  <div class="ml-[21px] mt-4">
    <div class="flex gap-2">
      <svg class="size-4"><use href="#sketch"/></svg><svg class="size-4"><use href="#extr"/></svg><svg class="size-4"><use href="#extr"/></svg>
      <svg width="16" height="16"><path d="M1 8q1-6 8-7l6 4v5l-3 5H1z" fill="#f2f4f7" stroke="#3c4a5c"/><path d="M6 2.500q5 0 6 7l3-4q-2-4-6-4.500z" fill="#9dbde6" stroke="#2f4a75"/></svg>
      <svg class="size-4"><use href="#extr"/></svg><svg class="size-4"><use href="#extr"/></svg><svg class="size-4"><use href="#extr"/></svg>
      <div class="relative"><svg class="size-4"><use href="#extr"/></svg><svg class="absolute -top-[9px] left-0" width="17" height="6"><path d="M1 5l3-4M6 5l3-4M11 5l3-4" stroke="#333" stroke-width="2"/></svg></div>
      <svg width="16" height="16"><path d="M8 0l2.800 3.500H9v2H7v-2H5.200zM8 16l2.800-3.500H9v-2H7v2H5.200zM0 8l3.500-2.800V7h2v2h-2v1.800zM16 8l-3.500-2.800V7h-2v2h2v1.800z" fill="#333"/><rect x="7" y="7" width="2" height="2" fill="#fff" stroke="#333"/></svg>
      <svg class="size-4"><use href="#extr"/></svg>
    </div>
    <svg class="ml-2 mt-1" width="220" height="6"><path d="M1 0v5h216V0M25 5V0M49 5V0M73 5V0M97 5V0M121 5V0M145 5V0M169 5V0M193 5V0" fill="none" stroke="#555" stroke-width="1.500"/></svg>
  </div>
  <svg class="-ml-[3px] mt-2.5" width="13" height="32"><path d="M0 0h12v4L7 9v23H5.500V9L0 4z" fill="#505050"/></svg>
  <button aria-label="Timeline settings" class="ml-auto mr-[9px] mt-[15px]"><svg width="17" height="17"><g stroke="#505050" stroke-width="3"><path d="M8.500.5v16M.5 8.500h16M3 3l11 11M14 3L3 14"/></g><circle cx="8.500" cy="8.500" r="4.500" fill="#ccc" stroke="#505050" stroke-width="2.600"/><circle cx="8.500" cy="8.500" r="1.700" fill="#505050"/></svg></button>
</section>

<!-- Windows taskbar -->
<footer class="flex h-10 shrink-0 items-stretch border-t border-[#3f5064] bg-[linear-gradient(90deg,#8093a9_0,#8399b2_60px,#a6bfdc_120px,#a6bfdc_1060px,#8194ab_1105px)] font-['Open_Sans','Noto_Sans',sans-serif] text-white">
  <button aria-label="Start" class="grid w-[54px] place-items-center"><svg width="37" height="37"><circle cx="18.500" cy="18.500" r="17.500" fill="url(#gOrb)" stroke="#2a425a"/><path d="M3 15a16 16 0 0 1 31 0q-15 6-31 0z" fill="#fff" opacity=".35"/><path d="M10 10q4-2 8 0l-1.500 7.500q-4-2-8 0z" fill="#ef6a2c"/><path d="M19.500 10.500q4 2 8.500.3L26.500 18q-4 2-8.500-.3z" fill="#8cc63f"/><path d="M8.200 19q4-2 8 0L14.700 26q-4-2-8 0z" fill="#3fa9e5"/><path d="M17.500 19q4 2 8.500.3L24.500 27q-4 2-8.500-.3z" fill="#fcc62c"/></svg></button>
  <div class="ml-[5px] flex gap-0.5">
    <button aria-label="Internet Explorer" class="grid w-[60px] place-items-center"><svg width="32" height="32"><path d="M6 18.500h20.500C27 9 22 5.500 16.500 5.500S6 10 6 17s5 11.500 11 11.500c4.500 0 8-2 9.200-6H20c-2 2.500-7.500 2-8-2.500H6M12 14.500c1-5 8.500-5 9 0z" fill="#49b8ee" stroke="#1b7ec2" fill-rule="evenodd"/><path d="M29.500 8C30 0 20 2 12 9S-1 26 3 30c1.500 1.500 5 .5 8-1.500C2 31 3 21 11 12.500S28 1 28 8z" fill="#f7c21c" stroke="#cf9508" stroke-width=".5"/></svg></button>
    <button aria-label="Firefox" class="grid w-[60px] place-items-center rounded-sm border border-[#3e5068] bg-gradient-to-br from-[#dde7f3] to-[#a3bbd8] shadow-[inset_0_0_0_1px_#ffffffaa]"><svg width="32" height="32"><circle cx="16" cy="16" r="14.500" fill="url(#gFox)"/><path d="M17 1.500a14.500 14.500 0 0 1 12 20q-2 1-2-5-5-12-10-15z" fill="#f8d24a"/><circle cx="17.500" cy="12.500" r="10" fill="#2a65ac"/><path d="M14 3q4 1 6 0 6 2 7 7-3-2-3 1t-4 1-6-9z" fill="#62b1e4"/><path d="M3 6q3 1 5 2 4-1 5 1-1 3 2 3-1 4-4 4 2 5 8 3 5-2 7-7 2 13-9 15T3 20 3 6z" fill="#ec7a1f"/></svg></button>
    <button aria-label="Chrome" class="grid w-[60px] place-items-center rounded-sm border border-[#3e5068] bg-gradient-to-br from-[#dde7f3] to-[#a3bbd8] shadow-[inset_0_0_0_1px_#ffffffaa]"><svg width="32" height="32"><circle cx="16" cy="16" r="15" fill="#f9cf45"/><path d="M16 16 3 8.500A15 15 0 0 1 29 8.500H16z" fill="#dd4b3e"/><path d="M3 8.500A15 15 0 0 0 15 31l7-11.500H16z" fill="#269f5a"/><circle cx="16" cy="16" r="7" fill="#f4f4f4"/><circle cx="16" cy="16" r="5.500" fill="#4285f4"/></svg></button>
    <button aria-label="Explorer" class="grid w-[60px] place-items-center rounded-sm border border-[#3e5068] bg-gradient-to-br from-[#dde7f3] to-[#a3bbd8] shadow-[inset_0_0_0_1px_#ffffffaa]"><svg width="34" height="32"><path d="M2 6l3-3h9l2 3h14l2 3v18H2z" fill="#f2dc8a" stroke="#b5963c"/><path d="M4 3h4v2H4z" fill="#2aa14a"/><path d="M14 5h4v2h-4z" fill="#d33"/><path d="M22 7h5v2h-5z" fill="#38c"/><path d="M3 10h28v16H3z" fill="#f8eaae"/><path d="M5 13h24" stroke="#dcc36a"/><path d="M6 20q0-2 2-2h18q2 0 2 2v11h-5v-7H11v7H6z" fill="#8fd3f0" stroke="#4aa3cc"/></svg></button>
    <button aria-label="Media Player" class="grid w-[60px] place-items-center"><svg width="28" height="28"><path d="M6 3h20v22H6z" fill="#7fb9de" stroke="#4b8dbc"/><path d="M4 2.500h18v23H4z" fill="#a9d4ef" stroke="#4b8dbc"/><path d="M2 2h18v24H2z" fill="#cfe6f5" stroke="#5b9bc7"/><circle cx="11.500" cy="14" r="8.500" fill="#f08222" stroke="#fff"/><path d="M9 9l8 5-8 5z" fill="#fff"/></svg></button>
    <button aria-label="App Inventor" class="grid w-[60px] place-items-center rounded-sm border border-[#3e5068] bg-gradient-to-br from-[#dde7f3] to-[#a3bbd8] shadow-[inset_0_0_0_1px_#ffffffaa]"><svg width="34" height="32"><path d="M2 1h10q-2 5 3 5t3-5h14v30H2V18q5 2 5-2.500T2 13z" fill="#85898c"/><path d="M7 31q0-11 11-11t11 11z" fill="#8fb83a" stroke="#fff" stroke-width="1.500"/><path d="M10 16l4 6M26 16l-4 6" stroke="#fff" stroke-width="2.500"/><circle cx="14" cy="26" r="1.300" fill="#fff"/><circle cx="22" cy="26" r="1.300" fill="#fff"/></svg></button>
    <button aria-label="Fusion 360" class="grid w-[60px] place-items-center rounded-sm border border-[#3e5068] bg-gradient-to-br from-[#f7fafd] to-[#cddbea] shadow-[inset_0_0_0_1px_#ffffffaa]"><svg class="size-8" viewBox="0 0 32 32"><use href="#fusion"/><text x="19" y="30" font-family="Liberation Sans, sans-serif" font-size="6" font-weight="bold" fill="#1592cf">360</text></svg></button>
    <button aria-label="PowerPoint" class="grid w-[60px] place-items-center rounded-sm border border-[#3e5068] bg-gradient-to-br from-[#dde7f3] to-[#a3bbd8] shadow-[inset_0_0_0_1px_#ffffffaa]"><svg width="32" height="32"><rect x="16" y="5" width="14" height="21" fill="#fff" stroke="#d04423" stroke-width="1.200"/><path d="M23 8a4.500 4.500 0 1 0 4.500 4.500H23z" fill="#d04423"/><path d="M24.500 7v4h4a4 4 0 0 0-4-4z" fill="#d04423"/><path d="M19 20h9M19 23h9" stroke="#d04423" stroke-width="1.500"/><path d="M1 4l18-3v30L1 28z" fill="#d04423"/><path d="M7.500 23V10.500h3.500q3.500 0 3.500 3.500t-3.500 3.700H7.500" fill="none" stroke="#fff" stroke-width="2.400"/></svg></button>
  </div>
  <div class="ml-auto flex items-center text-[11px]">
    <span class="mr-2">PT</span>
    <svg class="mr-3" width="16" height="13"><rect x=".5" y="4" width="15" height="8" rx="1" fill="#8a98a8" stroke="#d5dbe2"/><path d="M2 6.500h12M2 8.500h12M4 10.500h8" stroke="#e9edf1" stroke-dasharray="1.500 .8"/><path d="M8 4q0-3 5-3" stroke="#d5dbe2" fill="none"/></svg>
    <svg class="mr-3" width="8" height="5"><path d="M0 4.500h8L4 0z" fill="#fff"/></svg>
    <svg class="mr-2.5" width="15" height="16"><path d="M9 14H1.500V2H9" fill="none" stroke="#fff" stroke-width="1.800"/><path d="M3 3h5v10H3z" fill="#5a6a7c"/><path d="M8.500 1v5M12 1v5" stroke="#fff" stroke-width="1.400"/><path d="M6 5h8.500v3.500q-1 2.500-3.300 2.500v3H9.500v-3Q7 11 6 8.500z" fill="#fff" stroke="#4a5a6c" stroke-width=".5"/></svg>
    <svg class="mr-1.5" width="17" height="16"><path d="M2 1v15" stroke="#fff" stroke-width="1.800"/><path d="M3 2q3-1 4 0 2 1 4 0v7q-2 1-4 0-1-1-4 0z" fill="#fff"/><circle cx="11" cy="11" r="5" fill="#dc2f2f" stroke="#8e1616" stroke-width=".6"/><path d="M8.800 8.800l4.400 4.400M13.200 8.800l-4.400 4.400" stroke="#fff" stroke-width="1.600"/></svg>
    <svg class="mr-2.5" width="15" height="14"><path d="M0 4.500h3L7 1v12L3 9.500H0z" fill="#fff"/><path d="M9 4q2 3 0 6M11 2q4 5 0 10" fill="none" stroke="#fff" stroke-width="1.300"/></svg>
    <svg class="mr-[18px]" width="16" height="13" fill="#fff"><path d="M0 10h2.500v3H0zM3.500 8.500H6V13H3.500zM7 6h2.500v7H7zM10 3.500h2.500V13H10zM13 0h2.500v13H13z"/></svg>
    <time class="mr-3 text-center leading-[17px]">16:36<br>25/04/2017</time>
    <button aria-label="Show desktop" class="h-full w-3.5 border border-[#a9bad0] bg-gradient-to-br from-[#8da0b8] to-[#5f748e]"></button>
  </div>
</footer>

<script>
// Draws the tessellated preview of Body3: shaded faces first, then triangle edges.
const svg = document.getElementById('mesh');
const NS = 'http://www.w3.org/2000/svg';
function add(d, attrs) {
  const p = document.createElementNS(NS, 'path');
  p.setAttribute('d', d);
  for (const k in attrs) p.setAttribute(k, attrs[k]);
  svg.appendChild(p);
}
// Point at parameter t on a Catmull-Rom curve through pts.
function at(pts, t) {
  const n = pts.length - 1, u = Math.max(0, Math.min(1, t)) * n;
  const i = Math.min(n - 1, Math.floor(u)), f = u - i;
  const a = pts[Math.max(0, i - 1)], b = pts[i], c = pts[i + 1], e = pts[Math.min(n, i + 2)];
  return [0, 1].map(k => 0.5 * (2 * b[k] + (c[k] - a[k]) * f + (2 * a[k] - 5 * b[k] + 4 * c[k] - e[k]) * f * f + (3 * b[k] - a[k] - 3 * c[k] + e[k]) * f * f * f));
}
const P = p => p[0].toFixed(1) + ' ' + p[1].toFixed(1);
function poly(pts, fill, op) { add('M' + pts.map(P).join('L') + 'z', { fill, opacity: op || 1 }); }
function curve(pts, w) {
  let d = '';
  for (let i = 0; i <= 60; i++) d += (i ? 'L' : 'M') + P(at(pts, i / 60));
  add(d, { fill: 'none', stroke: '#fff', 'stroke-width': w || 1 });
}
// Triangle strip between two curves.
function strip(a, b, n, color, w, skew) {
  let d = '';
  for (let i = 0; i <= n; i++) {
    d += 'M' + P(at(a, i / n)) + 'L' + P(at(b, i / n));
    if (i < n) d += 'L' + P(at(a, (i + (skew || 1)) / n));
  }
  add(d, { fill: 'none', stroke: color || '#fff', 'stroke-width': w || 1, 'shape-rendering': 'crispEdges' });
}
// Plain rulings between two curves.
function rule(a, b, n, color) {
  let d = '';
  for (let i = 0; i <= n; i++) d += 'M' + P(at(a, i / n)) + 'L' + P(at(b, i / n));
  add(d, { fill: 'none', stroke: color || '#fff', 'stroke-width': 1, 'shape-rendering': 'crispEdges' });
}
function lines(list, color, w) {
  add(list.map(l => `M${l[0]} ${l[1]}L${l[2]} ${l[3]}`).join(''), { fill: 'none', stroke: color || '#d8e4fb', 'stroke-width': w || 1 });
}

// Shaded faces
add('M396 400C400 375 420 356 450 346 475 338 495 336 512 334L511 315Q512 297 530 293L745 262Q770 262 770 284V300Q835 302 866 334 886 356 885 380V415L882 428 820 563C795 600 745 618 695 618 655 618 625 608 602 595L435 498Q396 478 396 445z', { fill: '#203252' });
poly([[485,470],[511,413],[640,393],[684,420],[684,480],[650,497],[650,525]], '#182845');
poly([[708,410],[740,378],[812,400],[815,520],[749,515],[708,470]], '#1a2a47');
poly([[522,325],[563,302],[730,278],[765,300],[760,345],[740,378],[640,393],[511,413],[511,365],[522,365]], '#183a78');
poly([[590,318],[720,303],[705,340],[640,346]], '#1b4a9a');
poly([[563,302],[730,278],[720,303],[600,316]], '#2a3c58');

// Long triangle edges
lines([
  [602,316,728,300],[615,322,770,303],[620,331,760,300],[560,335,770,337],[520,340,765,341],[525,366,700,320],[640,344,760,300],[640,318,730,282],[600,317,640,311],
  [517,377,640,377],[517,379,740,379],[520,375,735,350],[600,316,715,336],[511,413,640,393],[517,380,700,330],[517,378,600,348],[517,378,610,356],
  [523,330,684,490],[511,375,684,508],[517,383,650,497],[485,425,650,435],[485,430,602,560],[485,468,640,520],[485,469,640,560],[435,463,602,594],
  [440,465,640,570],[435,498,655,560],[511,413,650,497],[520,410,684,455],
  [765,347,750,480],[755,378,708,475],[740,378,708,412],[808,388,752,478],[806,392,749,515],[804,395,763,517],[812,400,767,517],[813,420,749,480],
  [812,420,818,527],[815,420,819,527],[881,398,820,527],[881,428,819,527],[802,390,708,408],[882,428,820,563]
]);
curve([[435,498],[520,547],[602,595]]);

// Left lobe
const lo = [[512,334],[470,341],[430,356],[404,382],[397,402],[402,428],[415,450],[434,463]];
const li = [[506,350],[482,358],[470,368],[468,385],[468,410],[468,430],[474,440],[485,469]];
strip(lo, li, 66, '#f0f4fd');
rule([[397,402],[410,415],[425,425],[434,463]], [[484,428],[480,432],[478,436],[485,469]], 12, '#b4c4e4');
curve(lo, 1.5);
strip([[397,402],[402,428],[415,450],[434,463]], [[397,447],[402,468],[415,484],[435,498]], 16);
rule([[434,463],[434,480],[435,498]], [[480,448],[484,462],[485,469]], 9);
curve([[397,447],[402,468],[415,484],[435,498]], 1.5);
poly([[395,402],[399,398],[401,470],[396,447]], '#fff', .8);
rule([[468,372],[476,352],[495,345],[511,342]], [[468,445],[485,425],[500,416],[511,413]], 20, '#b4ccf6');
rule([[468,400],[485,410]], [[468,455],[485,469]], 7, '#e4edff');
add('M469 378Q472 358 495 348L511 344V384L485 402 470 415z', { fill: '#dbe7fd', opacity: .55 });
add('M491 372Q496 360 512 358V383Q498 388 491 372zM448 428Q460 418 484 429 470 438 452 432z', { fill: '#f8faff', opacity: .9 });
poly([[402,397],[470,422],[470,427],[402,400]], '#fff', .9);

// Right lobe
const ro = [[770,300],[800,302],[840,314],[868,338],[884,362],[885,380],[881,398]];
const ri = [[770,308],[790,309],[806,320],[812,335],[813,360],[813,380],[813,395]];
strip(ro, ri, 56, '#f0f4fd');
rule([[884,362],[885,380],[881,398]], [[813,340],[813,360],[813,380]], 9, '#b4c4e4');
rule([[884,375],[885,385],[881,408],[881,428]], [[813,384],[813,392],[813,405],[813,420]], 16);
curve(ro, 1.5);
lines([[885,370,885,415],[884,370,884,420],[882,380,882,428],[881,390,881,428],[885,415,882,428],[813,335,813,420],[811,335,811,400]], '#fff', 1);
strip([[740,342],[770,343],[795,350],[812,366]], [[740,377],[770,377],[795,384],[812,398]], 20, '#d9e6ff');
rule([[742,342],[770,343],[795,350],[812,366]], [[742,320],[770,309],[795,311],[812,335]], 30, '#c8dafa');
add('M770 315Q806 314 810 336V362Q792 344 770 341z', { fill: '#edf3ff', opacity: .8 });
add('M770 345Q795 348 810 364V385Q795 370 770 366z', { fill: '#c6d9fb', opacity: .7 });

// Upright plate: the two diagonal ribs
rule([[520,325],[563,302]], [[646,397],[690,372]], 13, '#e7f0ff');
strip([[535,316],[590,345],[645,380],[690,400]], [[563,302],[620,335],[680,369],[700,385]], 34, '#d4e2fb', 1, 3);
lines([[520,325,646,397],[563,302,690,372]], '#fff', 1.5);
rule([[732,280],[770,286]], [[687,378],[712,412]], 11, '#f0f5ff');
rule([[736,282],[718,308],[703,340],[690,370]], [[770,290],[752,325],[733,362],[714,405]], 22, '#d4e2fb');
lines([[732,280,687,378]], '#fff', 1.5);
poly([[770,290],[770,343],[748,343],[745,335]], '#a9c5f6', .75);
poly([[770,288],[768,298],[712,414],[708,404],[752,308]], '#f3f7ff', .85);
add('M511 378V315Q512 297 530 293L745 262Q770 262 770 284V300L764 290Q756 276 740 276L563 302 534 304Q521 308 521 325V366L517 368V380z', { fill: '#f4f8ff' });
add('M540 303L640 289 738 274M536 300L640 286 738 271', { stroke: '#7f90b0', fill: 'none', 'stroke-dasharray': '1 2' });
lines([[521,325,521,364],[769,290,769,345]], '#c9dcff');
rule([[520,328],[524,304]], [[532,332],[566,303]], 10, '#e4edff');
poly([[522,325],[526,306],[545,303],[530,322]], '#eef4ff', .6);

// Solid slivers
poly([[517,380],[650,417],[650,432],[600,412]], '#dce8ff', .93);
poly([[482,428],[650,524],[655,531],[645,526]], '#f3f7ff');
poly([[708,411],[808,384],[808,389],[675,430]], '#e6eeff');
rule([[646,438],[662,438]], [[664,532],[668,536]], 6, '#dce8ff');
rule([[660,432],[684,420]], [[684,462],[684,470]], 8, '#c4d7f8');

// Boss and column
add('M643 374Q643 362 658 362T673 374V432Q670 438 658 438T643 430z', { fill: '#d7e4fc', opacity: .85 });
lines([[648,366,648,435],[652,365,652,437],[656,365,656,437],[660,366,660,437],[664,366,664,437],[668,366,668,436]], '#f4f8ff');
add('M650 380v35M658 375v50M666 380v45', { stroke: '#8195bb', 'stroke-dasharray': '1 3' });
rule([[673,366],[690,375]], [[673,412],[690,420]], 9, '#eff5ff');
poly([[684,376],[694,374],[708,400],[708,478],[684,480]], '#c2d0ea', .6);
rule([[684,380],[708,400]], [[684,480],[708,476]], 9);
lines([[684,380,684,480],[686,380,686,480],[707,400,707,476],[709,400,709,474]], '#fff', 1.500);
poly([[684,376],[694,374],[708,400],[708,420],[684,420]], '#f2f6ff', .85);
let dashes = '';
for (let y = 424; y < 466; y += 5) dashes += `M689 ${y}h13M691 ${y + 2}h9`;
add(dashes, { stroke: '#3e5274', fill: 'none', 'stroke-dasharray': '1 2' });
const e1 = [[652,496],[665,502],[692,505],[720,502],[740,493],[749,480]];
poly([[684,480],[708,474],[749,480],[740,493],[720,502],[692,505],[665,502],[652,496]], '#2c3d5c');
rule([[684,478],[690,480],[700,479],[709,473]], e1, 34);
curve(e1);
const e2 = [[652,532],[665,537],[692,541],[720,537],[740,530],[749,520]];
const e3 = [[652,566],[665,574],[692,578],[720,572],[740,562],[749,550]];
const ft = [[602,560],[625,572],[655,580],[700,582],[750,575],[790,557],[819,527]];
const fb = [[602,595],[640,611],[695,618],[750,611],[790,592],[820,563]];
rule([[650,527],[655,545],[670,562],[700,566],[735,555],[749,535],[749,516]], ft, 86, '#eef4ff');
rule([[640,538],[652,556],[690,575],[749,545]], [[602,560],[625,572],[700,582],[780,562]], 20, '#b8c8e8');
strip(e2, e3, 20);
strip(e1, e2, 22);
curve(e2); curve(ft);
strip(ft, fb, 44);
curve(fb, 1.5);
lines([[602,560,602,595],[604,561,604,595],[819,527,820,563],[818,530,818,564],[749,480,749,550],[652,496,652,570],[748,480,748,550]], '#fff');
poly([[668,537],[708,527],[749,522],[749,531],[715,541],[690,541]], '#f2f7ff', .95);
poly([[708,472],[749,507],[749,514],[704,478]], '#f4f8ff', .95);
poly([[648,566],[662,570],[718,608],[718,615]], '#f2f7ff', .85);
lines([[749,480,708,474],[819,527,749,516]], '#fff');
</script>
</body>
</html>
